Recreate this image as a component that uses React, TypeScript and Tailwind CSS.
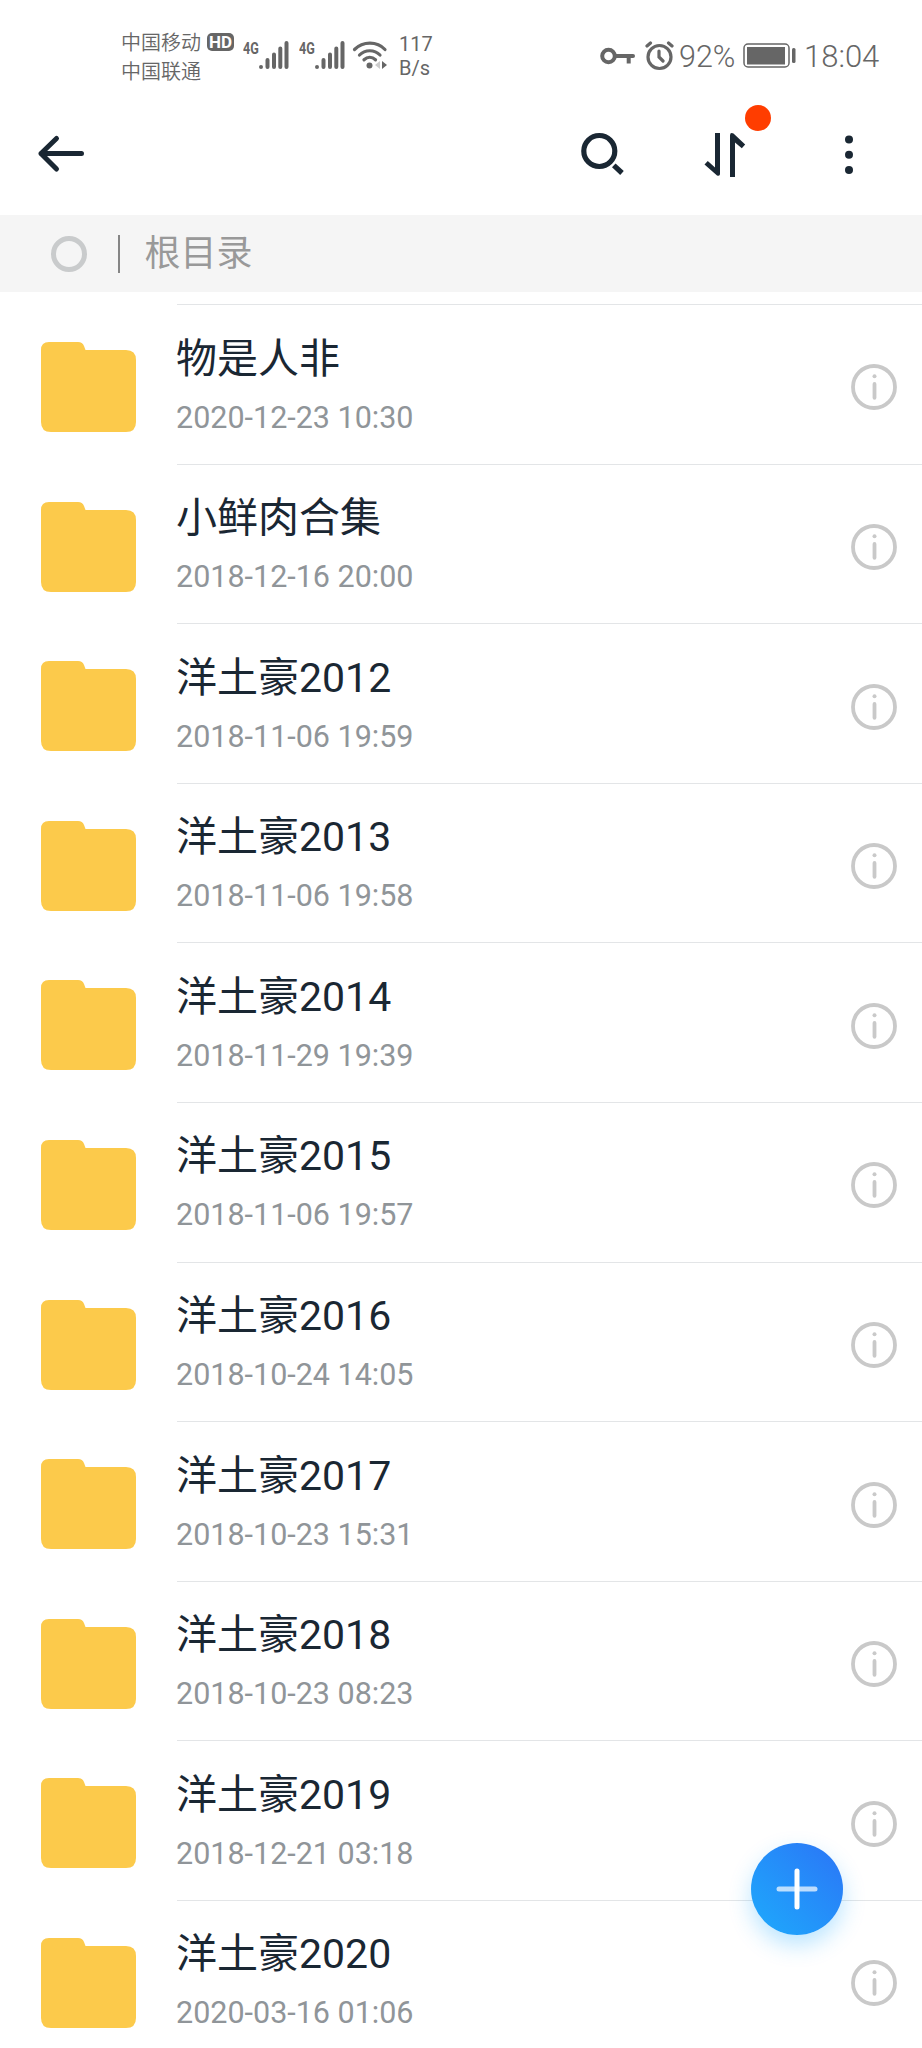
const folders = [
  { name: '物是人非', date: '2020-12-23 10:30' },
  { name: '小鲜肉合集', date: '2018-12-16 20:00' },
  { name: '洋土豪2012', date: '2018-11-06 19:59' },
  { name: '洋土豪2013', date: '2018-11-06 19:58' },
  { name: '洋土豪2014', date: '2018-11-29 19:39' },
  { name: '洋土豪2015', date: '2018-11-06 19:57' },
  { name: '洋土豪2016', date: '2018-10-24 14:05' },
  { name: '洋土豪2017', date: '2018-10-23 15:31' },
  { name: '洋土豪2018', date: '2018-10-23 08:23' },
  { name: '洋土豪2019', date: '2018-12-21 03:18' },
  { name: '洋土豪2020', date: '2020-03-16 01:06' },
]

function Signal() {
  return (
    <div className="flex">
      <span className="mt-[13px] w-4 origin-left scale-x-[0.74] text-[17px] leading-[20px] font-bold">
        4G
      </span>
      <svg width="30" height="28" viewBox="0 0 30 28" className="mt-[16px]">
        <g stroke="#666" strokeWidth="4" strokeLinecap="round">
          <path d="M2 26v0M8.500 19V26M15 13.500V26M21.300 7.500V26M27.500 2V26" />
        </g>
      </svg>
    </div>
  )
}

function Wifi() {
  return (
    <svg width="36" height="30" viewBox="0 0 36 30" className="mt-[15px]">
      <g fill="none" stroke="#666" strokeWidth="3.200" strokeLinecap="round">
        <path d="M2.500 9.500C11 1 25 1 33 9.500" />
        <path d="M7.500 15C13 9.300 22.500 9.300 28 15" />
        <path d="M12 19.800C15.500 16.600 20 16.600 23.500 19.800" />
      </g>
      <circle cx="17.500" cy="25.500" r="3" fill="#666" />
      <path d="M28 21v8l-5-4z" fill="#ccc" />
      <path d="M30 21v8l5-4z" fill="#666" />
    </svg>
  )
}

function StatusBar() {
  return (
    <div className="flex h-[106px] pt-[25px] text-[#666]">
      <div className="ml-[121px] w-[86px] pt-[4px] text-[20px] leading-[29px] font-[350]">
        <p>中国移动</p>
        <p>中国联通</p>
      </div>
      <span className="mt-[8px] h-[18px] w-[27px] rounded-[5px] bg-[#666] text-center text-[17px] leading-[19px] font-bold text-white">
        HD
      </span>
      <div className="ml-[9px] flex w-[56px]">
        <Signal />
      </div>
      <Signal />
      <div className="ml-[7px]">
        <Wifi />
      </div>
      <div className="ml-[11px] w-[61px] pt-[7px] text-[20px] leading-[24px]">
        <p>117</p>
        <p>B/s</p>
      </div>
      <svg width="36" height="20" viewBox="0 0 36 20" className="mt-[21px] ml-[140px]">
        <g fill="none" stroke="#666">
          <circle cx="8.500" cy="10" r="6.300" strokeWidth="4" />
          <path d="M15 10H33" strokeWidth="4" strokeLinecap="round" />
          <path d="M28.700 10v7.500" strokeWidth="4" />
        </g>
      </svg>
      <svg width="30" height="30" viewBox="0 0 30 30" className="mt-[16px] ml-[9px]">
        <g fill="none" stroke="#666" strokeWidth="3.200" strokeLinecap="round">
          <circle cx="14.500" cy="16" r="11.500" />
          <path d="M14 10v6l4 4M2 5l3.500-3M27 5l-3.500-3" />
        </g>
      </svg>
      <span className="ml-[4px] w-[62px] pt-[12px] text-[30.500px] leading-[40px] font-light">
        92%
      </span>
      <svg width="54" height="26" viewBox="0 0 54 26" className="mt-[18px] ml-[2px]">
        <rect x="1" y="1" width="45" height="23" rx="4" fill="none" stroke="#666" strokeWidth="1.500" />
        <rect x="4" y="4" width="38" height="17.500" fill="#666" />
        <rect x="49" y="5" width="3.500" height="15" rx="1.500" fill="#666" />
      </svg>
      <span className="ml-[7px] pt-[12px] text-[31px] leading-[40px] font-light">18:04</span>
    </div>
  )
}

function Toolbar() {
  return (
    <div className="flex h-[109px] text-[#1a2733]">
      <button type="button" className="mt-[28px] ml-[37px] h-[40px]">
        <svg width="50" height="40" viewBox="0 0 50 40">
          <path
            d="M44.500 19.500H4M19.500 4.500L4 19.500L19.500 35"
            fill="none"
            stroke="currentColor"
            strokeWidth="5"
            strokeLinecap="round"
            strokeLinejoin="round"
          />
        </svg>
      </button>
      <button type="button" className="mt-[26px] ml-[493px] h-[46px]">
        <svg width="46" height="46" viewBox="0 0 46 46">
          <g fill="none" stroke="currentColor" strokeWidth="5.200">
            <circle cx="19.300" cy="19" r="15.500" />
            <path d="M33.800 33.300L42 41" />
          </g>
        </svg>
      </button>
      <button type="button" className="relative mt-[26px] ml-[76px] h-[46px]">
        <svg width="46" height="46" viewBox="0 0 46 46">
          <g fill="currentColor">
            <path d="M13 1H18V42Q18 44.500 15 43.500L2.500 32.500L5.800 29L13 35.500Z" />
            <path d="M33 45H28V3.500Q28 0 31.500 1.500L43.200 12.500L39.800 16.300L33 10.500Z" />
          </g>
        </svg>
        <span className="absolute -top-[27px] left-[43px] size-[26px] rounded-full bg-[#ff3d00]" />
      </button>
      <button type="button" className="mt-[29px] ml-[96px] h-[40px]">
        <svg width="10" height="40" viewBox="0 0 10 40">
          <g fill="currentColor">
            <circle cx="5" cy="4.500" r="4" />
            <circle cx="5" cy="19.700" r="4" />
            <circle cx="5" cy="35" r="4" />
          </g>
        </svg>
      </button>
    </div>
  )
}

function Breadcrumb() {
  return (
    <div className="flex h-[77px] items-center bg-[#f5f5f5]">
      <span className="ml-[51px] size-[36px] rounded-full border-[5px] border-[#c9cbcc]" />
      <span className="ml-[31px] h-[38px] w-[1.500px] bg-[#858585]" />
      <span className="ml-[25px] text-[36px] leading-[48px] text-[#999]">根目录</span>
    </div>
  )
}

function FolderIcon() {
  return (
    <svg width="95" height="90" viewBox="0 0 95 90">
      <path
        d="M8 0H37Q41.500 0 43 4L44.500 8H85Q95 8 95 18V80Q95 90 85 90H10Q0 90 0 80V8Q0 0 8 0Z"
        fill="#fcca4b"
      />
    </svg>
  )
}

function InfoIcon() {
  return (
    <svg width="46" height="46" viewBox="0 0 46 46">
      <circle cx="23" cy="23" r="21" fill="none" stroke="#c9c9c9" strokeWidth="3.800" />
      <circle cx="23.500" cy="12.300" r="2" fill="#c9c9c9" />
      <path d="M23.500 20V33.800" stroke="#c9c9c9" strokeWidth="3.800" strokeLinecap="round" />
    </svg>
  )
}

function FolderRow({ name, date }: { name: string; date: string }) {
  return (
    <li className="flex h-[159.600px]">
      <div className="w-[177px] shrink-0 pt-[38px] pl-[41px]">
        <FolderIcon />
      </div>
      <div className="flex flex-1 justify-between border-t border-[#e3e5e7]">
        <div className="-ml-px pt-[26.500px]">
          <p className="text-[41px] leading-[54px] text-[#1a2733]">{name}</p>
          <p className="mt-[12px] text-[30.500px] leading-[40px] text-[#909599]">{date}</p>
        </div>
        <button type="button" className="mt-[59.400px] mr-[25.500px] h-[46px]">
          <InfoIcon />
        </button>
      </div>
    </li>
  )
}

export default function App() {
  return (
    <div
      lang="zh-CN"
      className="relative h-[2048px] w-[922px] overflow-hidden bg-white font-['Roboto','Noto_Sans_CJK_SC',sans-serif]"
    >
      <StatusBar />
      <Toolbar />
      <Breadcrumb />
      <ul className="pt-[12px]">
        {folders.map((folder) => (
          <FolderRow key={folder.name} name={folder.name} date={folder.date} />
        ))}
      </ul>

      <button
        type="button"
        className="absolute top-[1843px] left-[750.500px] flex size-[92px] items-center justify-center rounded-full bg-linear-to-tr from-[#1eaafc] to-[#2b74f6] shadow-[0_10px_22px_rgba(30,170,255,0.3)]"
      >
        <svg width="42" height="42" viewBox="0 0 42 42">
          <g stroke="#fff" strokeWidth="5" strokeLinecap="round">
            <path d="M3 21H39" strokeOpacity="0.7" />
            <path d="M21 3V39" />
          </g>
        </svg>
      </button>
    </div>
  )
}
